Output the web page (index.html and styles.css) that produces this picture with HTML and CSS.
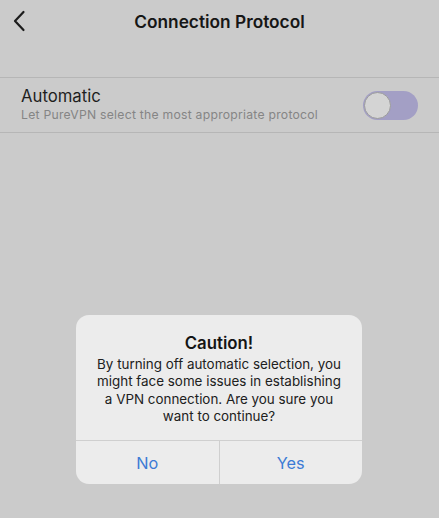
FILE: index.html
```html
<!DOCTYPE html>
<html lang="en">
  <head>
    <meta charset="UTF-8" />
    <meta name="viewport" content="width=device-width, initial-scale=1.0" />
    <title>Connection Protocol</title>
    <link rel="stylesheet" href="styles.css">
  </head>
  <body>
    <header class="topBar">
      <button class="backBtn" aria-label="Back">
        <svg width="14" height="22" viewBox="0 0 14 22">
          <path d="M11.5 2 L3 11 L11.5 20" fill="none" stroke="#1c1c1c" stroke-width="2.2" stroke-linecap="round" stroke-linejoin="round"/>
        </svg>
      </button>
      <h1>Connection Protocol</h1>
    </header>

    <section class="settings">
      <div class="settingRow">
        <div class="rowText">
          <div class="rowTitle">Automatic</div>
          <div class="rowSub">Let PureVPN select the most appropriate protocol</div>
        </div>
        <div class="toggle"><span class="knob"></span></div>
      </div>
    </section>

    <div class="alert">
      <div class="alertBody">
        <h2>Caution!</h2>
        <p>By turning off automatic selection, you<br>might face some issues in establishing<br>a VPN connection. Are you sure you<br>want to continue?</p>
      </div>
      <div class="alertActions">
        <button>No</button>
        <button>Yes</button>
      </div>
    </div>
  </body>
</html>
```

FILE: styles.css
```css
html {
  font-family: 'Inter', 'Liberation Sans', sans-serif;
}
body {
  margin: 0;
  width: 439px;
  height: 518px;
  background: #cbcbcb;
  position: relative;
  overflow: hidden;
  color: #1a1a1a;
}
.topBar {
  height: 42px;
  display: flex;
  align-items: center;
  justify-content: center;
  position: relative;
}
.topBar h1 {
  margin: 0;
  font-size: 17.3px;
  font-weight: 600;
  color: #161616;
}
.backBtn {
  position: absolute;
  left: 11px;
  top: 10px;
  border: none;
  background: none;
  padding: 0;
  width: 16px;
  height: 24px;
}
.settings {
  margin-top: 35px;
}
.settingRow {
  display: flex;
  align-items: center;
  justify-content: space-between;
  height: 54px;
  border-top: 1px solid #b6b6b6;
  border-bottom: 1px solid #b6b6b6;
  padding: 0 21px 0 21px;
}
.rowText {
  padding-bottom: 1px;
}
.rowTitle {
  font-size: 16.7px;
  color: #1e1e1e;
  line-height: 20px;
}
.rowSub {
  font-size: 12.2px;
  color: #858585;
  line-height: 17px;
  letter-spacing: 0.25px;
}
.toggle {
  width: 55px;
  height: 29px;
  border-radius: 15px;
  background: #a39fc5;
  position: relative;
}
.knob {
  position: absolute;
  left: 1px;
  top: 1px;
  width: 27px;
  height: 27px;
  border-radius: 50%;
  background: #d4d4d4;
  border: 1.5px solid #9c9c9c;
  box-sizing: border-box;
}
.alert {
  position: absolute;
  left: 76px;
  top: 315px;
  width: 286px;
  height: 169px;
  background: #ececec;
  border-radius: 13px;
  display: flex;
  flex-direction: column;
  overflow: hidden;
}
.alertBody {
  flex: 1;
  text-align: center;
  padding: 17px 8px 0;
  border-bottom: 1px solid #cfcfcf;
}
.alertBody h2 {
  margin: 0;
  font-size: 16.8px;
  font-weight: 600;
  line-height: 22px;
  color: #141414;
}
.alertBody p {
  margin: 2px 0 0;
  font-size: 13.4px;
  line-height: 17.4px;
  color: #202020;
  white-space: nowrap;
}
.alertActions {
  display: flex;
  height: 43px;
}
.alertActions button {
  flex: 1;
  border: none;
  background: none;
  font-family: inherit;
  font-size: 16.3px;
  color: #3c7bd5;
  padding: 0;
}
.alertActions button + button {
  border-left: 1px solid #cfcfcf;
}
```
